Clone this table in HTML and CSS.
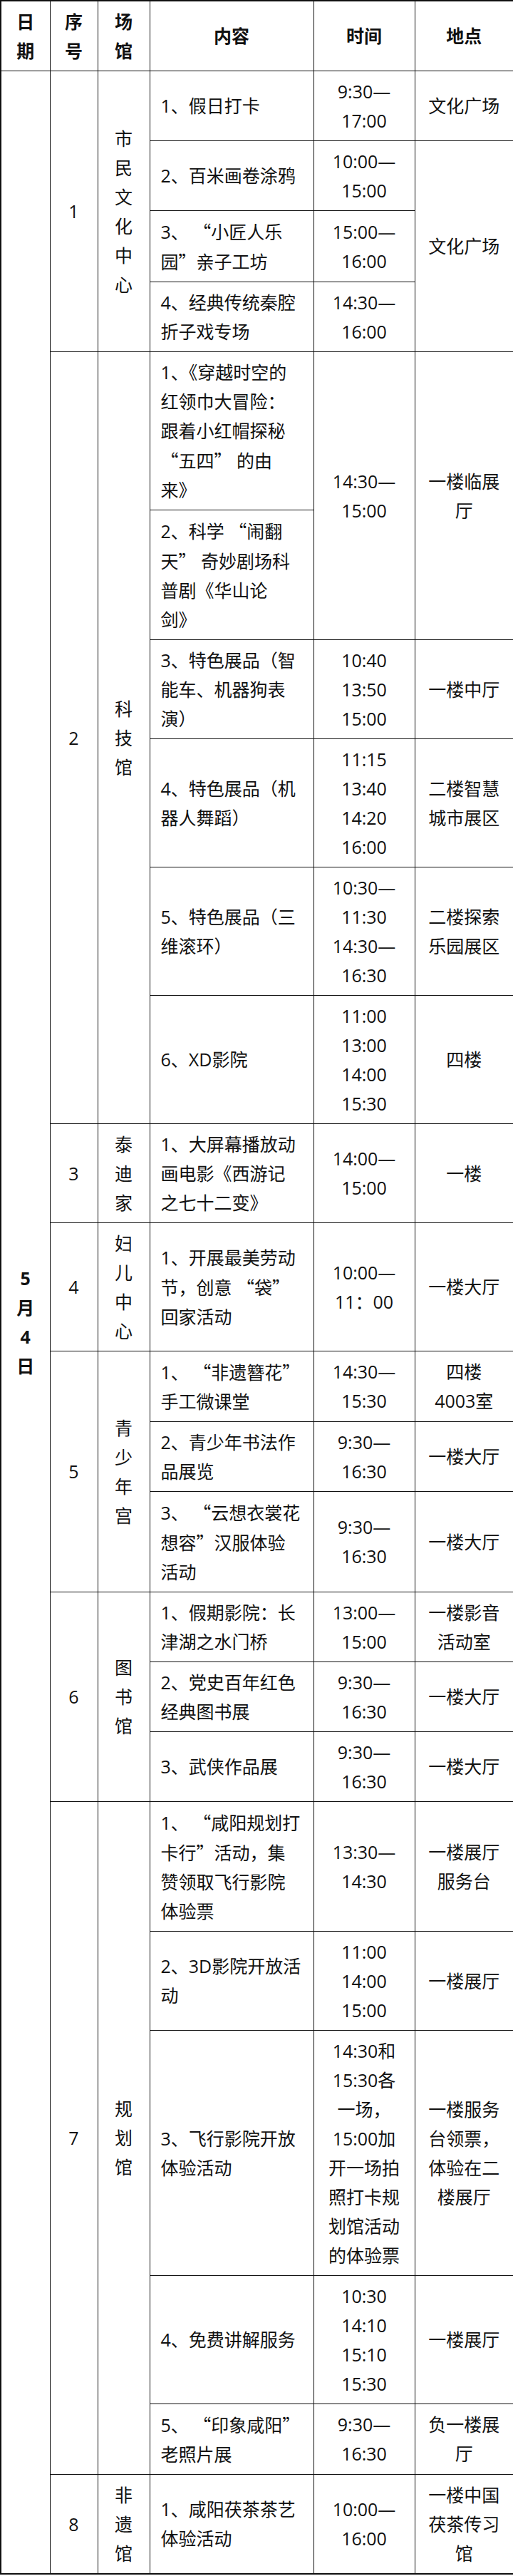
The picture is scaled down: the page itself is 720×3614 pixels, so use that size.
FILE: index.html
```html
<!DOCTYPE html>
<html lang="zh-CN">
<head>
<meta charset="utf-8">
<title>5月4日活动安排</title>
<link rel="stylesheet" href="styles.css">
</head>
<body>
<table class="schedule">
  <colgroup>
    <col class="c-date">
    <col class="c-no">
    <col class="c-venue">
    <col class="c-content">
    <col class="c-time">
    <col class="c-place">
  </colgroup>
  <thead>
    <tr>
      <th>日<br>期</th>
      <th>序<br>号</th>
      <th>场<br>馆</th>
      <th>内容</th>
      <th>时间</th>
      <th>地点</th>
    </tr>
  </thead>
  <tbody>
    <tr>
      <td class="date" rowspan="24">5<br>月<br>4<br>日</td>
      <td rowspan="4">1</td>
      <td rowspan="4">市<br>民<br>文<br>化<br>中<br>心</td>
      <td class="content">1、假日打卡</td>
      <td>9:30—<br>17:00</td>
      <td>文化广场</td>
    </tr>
    <tr>
      <td class="content">2、百米画卷涂鸦</td>
      <td>10:00—<br>15:00</td>
      <td rowspan="3">文化广场</td>
    </tr>
    <tr>
      <td class="content">3、 <span class="q">“</span>小匠人乐<br>园<span class="q">”</span>亲子工坊</td>
      <td>15:00—<br>16:00</td>
    </tr>
    <tr>
      <td class="content">4、经典传统秦腔<br>折子戏专场</td>
      <td>14:30—<br>16:00</td>
    </tr>

    <tr>
      <td rowspan="6">2</td>
      <td rowspan="6">科<br>技<br>馆</td>
      <td class="content">1、《穿越时空的<br>红领巾大冒险：<br>跟着小红帽探秘<br><span class="q">“</span>五四<span class="q">”</span> 的由<br>来》</td>
      <td rowspan="2">14:30—<br>15:00</td>
      <td rowspan="2">一楼临展<br>厅</td>
    </tr>
    <tr>
      <td class="content">2、科学 <span class="q">“</span>闹翻<br>天<span class="q">”</span> 奇妙剧场科<br>普剧《华山论<br>剑》</td>
    </tr>
    <tr>
      <td class="content">3、特色展品（智<br>能车、机器狗表<br>演）</td>
      <td>10:40<br>13:50<br>15:00</td>
      <td>一楼中厅</td>
    </tr>
    <tr>
      <td class="content">4、特色展品（机<br>器人舞蹈）</td>
      <td>11:15<br>13:40<br>14:20<br>16:00</td>
      <td>二楼智慧<br>城市展区</td>
    </tr>
    <tr>
      <td class="content">5、特色展品（三<br>维滚环）</td>
      <td>10:30—<br>11:30<br>14:30—<br>16:30</td>
      <td>二楼探索<br>乐园展区</td>
    </tr>
    <tr>
      <td class="content">6、XD影院</td>
      <td>11:00<br>13:00<br>14:00<br>15:30</td>
      <td>四楼</td>
    </tr>

    <tr>
      <td>3</td>
      <td>泰<br>迪<br>家</td>
      <td class="content">1、大屏幕播放动<br>画电影《西游记<br>之七十二变》</td>
      <td>14:00—<br>15:00</td>
      <td>一楼</td>
    </tr>

    <tr>
      <td>4</td>
      <td>妇<br>儿<br>中<br>心</td>
      <td class="content">1、开展最美劳动<br>节，创意 <span class="q">“</span>袋<span class="q">”</span><br>回家活动</td>
      <td>10:00—<br>11：00</td>
      <td>一楼大厅</td>
    </tr>

    <tr>
      <td rowspan="3">5</td>
      <td rowspan="3">青<br>少<br>年<br>宫</td>
      <td class="content">1、 <span class="q">“</span>非遗簪花<span class="q">”</span><br>手工微课堂</td>
      <td>14:30—<br>15:30</td>
      <td>四楼<br>4003室</td>
    </tr>
    <tr>
      <td class="content">2、青少年书法作<br>品展览</td>
      <td>9:30—<br>16:30</td>
      <td>一楼大厅</td>
    </tr>
    <tr>
      <td class="content">3、 <span class="q">“</span>云想衣裳花<br>想容<span class="q">”</span>汉服体验<br>活动</td>
      <td>9:30—<br>16:30</td>
      <td>一楼大厅</td>
    </tr>

    <tr>
      <td rowspan="3">6</td>
      <td rowspan="3">图<br>书<br>馆</td>
      <td class="content">1、假期影院：长<br>津湖之水门桥</td>
      <td>13:00—<br>15:00</td>
      <td>一楼影音<br>活动室</td>
    </tr>
    <tr>
      <td class="content">2、党史百年红色<br>经典图书展</td>
      <td>9:30—<br>16:30</td>
      <td>一楼大厅</td>
    </tr>
    <tr>
      <td class="content">3、武侠作品展</td>
      <td>9:30—<br>16:30</td>
      <td>一楼大厅</td>
    </tr>

    <tr>
      <td rowspan="5">7</td>
      <td rowspan="5">规<br>划<br>馆</td>
      <td class="content">1、 <span class="q">“</span>咸阳规划打<br>卡行<span class="q">”</span>活动，集<br>赞领取飞行影院<br>体验票</td>
      <td>13:30—<br>14:30</td>
      <td>一楼展厅<br>服务台</td>
    </tr>
    <tr>
      <td class="content">2、3D影院开放活<br>动</td>
      <td>11:00<br>14:00<br>15:00</td>
      <td>一楼展厅</td>
    </tr>
    <tr>
      <td class="content">3、飞行影院开放<br>体验活动</td>
      <td>14:30和<br>15:30各<br>一场，<br>15:00加<br>开一场拍<br>照打卡规<br>划馆活动<br>的体验票</td>
      <td>一楼服务<br>台领票，<br>体验在二<br>楼展厅</td>
    </tr>
    <tr>
      <td class="content">4、免费讲解服务</td>
      <td>10:30<br>14:10<br>15:10<br>15:30</td>
      <td>一楼展厅</td>
    </tr>
    <tr>
      <td class="content">5、 <span class="q">“</span>印象咸阳<span class="q">”</span><br>老照片展</td>
      <td>9:30—<br>16:30</td>
      <td>负一楼展<br>厅</td>
    </tr>

    <tr>
      <td>8</td>
      <td>非<br>遗<br>馆</td>
      <td class="content">1、咸阳茯茶茶艺<br>体验活动</td>
      <td>10:00—<br>16:00</td>
      <td>一楼中国<br>茯茶传习<br>馆</td>
    </tr>
  </tbody>
</table>
</body>
</html>
```

FILE: styles.css
```css
* {
  box-sizing: border-box;
}

html,
body {
  margin: 0;
  padding: 0;
  background: #ffffff;
}

body {
  font-family: "Open Sans", "Noto Sans CJK SC", sans-serif;
  font-size: 25px;
  color: #111111;
}

.schedule {
  width: 720px;
  table-layout: fixed;
  border-collapse: collapse;
  border: 2px solid #111111;
}

.c-date { width: 69px; }
.c-no { width: 67px; }
.c-venue { width: 73px; }
.c-content { width: 230px; }
.c-time { width: 142px; }
.c-place { width: 139px; }

.schedule th,
.schedule td {
  border: 1px solid #111111;
  padding: 7.5px 0;
  line-height: 41px;
  text-align: center;
  vertical-align: middle;
  white-space: nowrap;
  font-weight: 400;
}

.schedule th {
  font-weight: 700;
}

.schedule td.date {
  font-weight: 700;
}

.schedule td.content {
  text-align: left;
  padding-left: 15px;
}

.q {
  font-family: "Noto Sans CJK SC", sans-serif;
  font-feature-settings: "fwid" 1;
}
```
